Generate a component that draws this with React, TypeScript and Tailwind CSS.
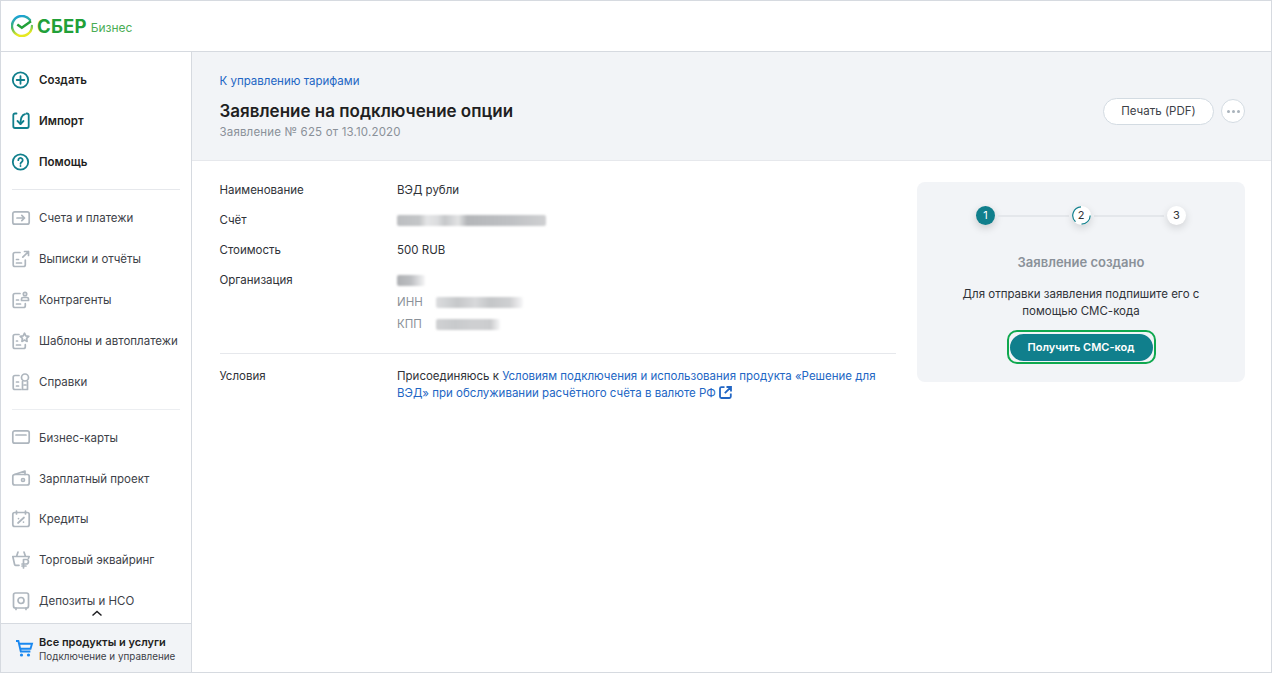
import React from "react";

const g = { fill: "none", stroke: "#aeb6be", strokeWidth: 1.7, strokeLinecap: "round", strokeLinejoin: "round" } as const;
const t = { fill: "none", stroke: "#107f8c", strokeWidth: 1.8, strokeLinecap: "round", strokeLinejoin: "round" } as const;

const Svg = ({ children }: { children: React.ReactNode }) => (
  <svg width="18" height="18" viewBox="0 0 18 18" className="shrink-0 overflow-visible">{children}</svg>
);

const icons: Record<string, React.ReactNode> = {
  create: <Svg><g {...t}><circle cx="8.5" cy="9" r="7.7" /><path d="M8.5 5.2v7.6M4.7 9h7.6" /></g></Svg>,
  import: <Svg><g {...t}><path d="M4.5 1.5H3A1.7 1.7 0 0 0 1.3 3.2v11.1A1.7 1.7 0 0 0 3 16h12a1.7 1.7 0 0 0 1.7-1.7V3.2A1.7 1.7 0 0 0 15 1.5h-.5" /><path d="M13 2.2C9.5 3 8.5 6 8.5 12" /><path d="M5.5 9l3 3 3-3" /></g></Svg>,
  help: <Svg><g {...t}><circle cx="8.5" cy="9" r="7.7" /><path d="M6.3 7.2a2.2 2.2 0 1 1 3.4 1.8c-.8.5-1.2.9-1.2 1.8" /><path d="M8.5 12.9v.1" /></g></Svg>,
  accounts: <Svg><g {...g}><rect x="0.8" y="2.8" width="16.4" height="12.4" rx="2" /><path d="M5 9h7.5M9.8 6.3 12.5 9l-2.7 2.7" /></g></Svg>,
  reports: <Svg><g {...g}><path d="M8 2.5H3a1.8 1.8 0 0 0-1.8 1.8v10.4A1.8 1.8 0 0 0 3 16.5h8.5a1.8 1.8 0 0 0 1.8-1.8V10" /><path d="M10.8 7.2 16.5 1.5M12.5 1.5h4v4" /><path d="M4.5 9.5h2M4.5 13h5" /></g></Svg>,
  partners: <Svg><g {...g}><path d="M8 2.5H3a1.8 1.8 0 0 0-1.8 1.8v10.4A1.8 1.8 0 0 0 3 16.5h8.5a1.8 1.8 0 0 0 1.8-1.8v-2" /><circle cx="13" cy="3" r="1.7" /><path d="M9.5 9.5V8a1.5 1.5 0 0 1 1.5-1.5h4A1.5 1.5 0 0 1 16.5 8v1.5z" /><path d="M4.5 9h2M4.5 13h4" /></g></Svg>,
  templates: <Svg><g {...g}><path d="M7 2.5H3a1.8 1.8 0 0 0-1.8 1.8v10.4A1.8 1.8 0 0 0 3 16.5h8.5a1.8 1.8 0 0 0 1.8-1.8v-2" /><path d="m12.5 1.2 1.3 2.7 3 .4-2.2 2.1.5 3-2.6-1.4-2.6 1.4.5-3-2.2-2.1 3-.4z" /><path d="M4.5 9h1M4.5 13h4" /></g></Svg>,
  refs: <Svg><g {...g}><path d="M7 2.5H3a1.8 1.8 0 0 0-1.8 1.8v10.4A1.8 1.8 0 0 0 3 16.5h6" /><circle cx="13" cy="4.5" r="3.5" /><path d="M10.5 8.5v8h5v-8" /><path d="M4.5 9h2M4.5 13h2M12 12h2" /></g></Svg>,
  cards: <Svg><g {...g}><rect x="0.8" y="2.8" width="16.4" height="12.4" rx="2" /><path d="M4 7h10" /></g></Svg>,
  salary: <Svg><g {...g}><path d="M2.5 5.5 13 2v3.5" /><rect x="0.8" y="5.5" width="16.4" height="10.5" rx="2" /><circle cx="11" cy="11" r="1.5" /></g></Svg>,
  credits: <Svg><g {...g}><rect x="0.8" y="2.5" width="16.4" height="14" rx="2" /><path d="M4.5 1v3M13.5 1v3M6 13l6-5.5" /><path d="M6.5 8.5v.1M11.5 12v.1" /></g></Svg>,
  acquiring: <Svg><g {...g}><path d="M4.5 5.5 6 1M13.5 5.5 12 1M.8 5.5h16.4l-.8 2M.8 5.5l1.8 8a1 1 0 0 0 1 .8H7" /><path d="M11.5 17V8.5h2.7a2 2 0 0 1 0 4.5H10M10 15h4" /></g></Svg>,
  deposits: <Svg><g {...g}><rect x="1.5" y="1" width="15" height="15" rx="2" /><circle cx="9" cy="8.5" r="3" /><path d="M4 16v1.5M14 16v1.5" /></g></Svg>,
};

const items1: [string, string][] = [["create", "Создать"], ["import", "Импорт"], ["help", "Помощь"]];
const items2: [string, string][] = [["accounts", "Счета и платежи"], ["reports", "Выписки и отчёты"], ["partners", "Контрагенты"], ["templates", "Шаблоны и автоплатежи"], ["refs", "Справки"]];
const items3: [string, string][] = [["cards", "Бизнес-карты"], ["salary", "Зарплатный проект"], ["credits", "Кредиты"], ["acquiring", "Торговый эквайринг"], ["deposits", "Депозиты и НСО"]];

function Item({ icon, label, bold, tight }: { icon: string; label: string; bold?: boolean; tight?: boolean }) {
  return (
    <div className={tight ? "flex h-[40.8px] items-center gap-[9px] pl-[11px]" : "flex h-[41px] items-center gap-[9px] pl-[11px]"}>
      {icons[icon]}
      <span className={bold ? "pt-[2px] text-[11.5px] font-semibold text-[#1f1f22]" : "whitespace-nowrap pt-[2px] text-[11.5px] text-[#3d4148]"}>{label}</span>
    </div>
  );
}

function Row({ label, children }: { label: string; children: React.ReactNode }) {
  return (
    <div className="flex">
      <div className="w-[177.5px] shrink-0 text-[#2f3238]">{label}</div>
      <div className="min-w-0 flex-1 text-[#2f3238]">{children}</div>
    </div>
  );
}

function Blur({ w, cls }: { w: number; cls: string }) {
  return <div className={cls} style={{ width: w }} />;
}

const blurAccount = "h-[11px] rounded-[2px] blur-[1px] bg-[linear-gradient(90deg,#bcbec1_0,#c4c6c8_15%,#e4e5e6_20%,#dcdddf_27%,#c6c8ca_32%,#d8d9db_38%,#e2e3e4_41%,#b4b6b9_47%,#bec0c3_75%,#cfd0d2_100%)]";
const blurOrg = "h-[11px] rounded-[2px] blur-[1px] bg-gradient-to-r from-[#aeb0b4] via-[#bdbfc2] to-[#f6f6f7]";
const blurInn = "h-[11px] rounded-[2px] blur-[1px] bg-[linear-gradient(90deg,#dcdddf_0,#c6c8ca_25%,#d8d9db_45%,#c4c6c8_62%,#cfd0d2_85%,#f7f7f8_100%)]";
const blurKpp = "h-[11px] rounded-[2px] blur-[1px] bg-[linear-gradient(90deg,#d0d1d3_0,#c8cacc_30%,#cfd0d2_60%,#cbccce_85%,#f7f7f8_100%)]";

function Step({ n, kind }: { n: number; kind: "done" | "active" | "todo" }) {
  if (kind === "done")
    return <div className="flex h-[19px] w-[19px] shrink-0 items-center justify-center rounded-full bg-[#107f8c] text-[11px] text-white shadow-[0_3px_8px_rgba(0,0,0,0.18)]">{n}</div>;
  return (
    <div className="relative flex h-[19px] w-[19px] shrink-0 items-center justify-center rounded-full bg-white text-[11px] text-[#2f3238] shadow-[0_3px_8px_rgba(0,0,0,0.14)]">
      {kind === "active" && (
        <svg width="19" height="19" viewBox="0 0 19 19" className="absolute left-0 top-0">
          <path d="M9 .8A8.7 8.7 0 0 0 3.5 15.8M9.5 18.2A8.7 8.7 0 0 0 18.2 9.5" fill="none" stroke="#107f8c" strokeWidth="1.2" />
        </svg>
      )}
      <span className="relative">{n}</span>
    </div>
  );
}

export default function App() {
  return (
    <div className="flex h-[673px] w-[1272px] flex-col overflow-hidden border border-[#d6dae0] bg-white text-[11.5px] leading-[17px]" style={{ fontFamily: "Inter, sans-serif" }}>
      <header className="flex h-[51px] shrink-0 items-center gap-[4px] border-b border-[#d6dae0] pl-[10px]">
        <svg width="22" height="22" viewBox="0 0 22 22" className="shrink-0">
          <defs>
            <linearGradient id="lg" x1="0.3" y1="0" x2="0.5" y2="1">
              <stop offset="0" stopColor="#1ba2d8" />
              <stop offset="0.5" stopColor="#3fb56a" />
              <stop offset="0.9" stopColor="#e6e820" />
            </linearGradient>
          </defs>
          <path d="M19 5A10 10 0 1 0 21 11" fill="none" stroke="url(#lg)" strokeWidth="2.4" strokeLinecap="round" />
          <path d="M6.3 9.6 10.8 12.8 20 6.3" fill="none" stroke="#21a038" strokeWidth="2.5" />
        </svg>
        <span className="text-[18.5px] font-bold leading-none tracking-[0.2px] text-[#21a038]">СБЕР</span>
        <span className="mt-[2px] text-[12px] text-[#4aad55]">Бизнес</span>
      </header>
      <div className="flex min-h-0 flex-1">
        <aside className="relative flex w-[191px] shrink-0 flex-col border-r border-[#d6dae0]">
          <div className="flex-1 overflow-hidden pt-[7px]">
            {items1.map(([i, l]) => <Item key={l} icon={i} label={l} bold />)}
            <div className="mx-[11px] my-[7px] h-px bg-[#e6e8ec]" />
            {items2.map(([i, l]) => <Item key={l} icon={i} label={l} />)}
            <div className="mx-[11px] my-[7px] h-px bg-[#eceef1]" />
            {items3.map(([i, l]) => <Item key={l} icon={i} label={l} tight />)}
          </div>
          <svg width="12" height="7" viewBox="0 0 12 7" className="absolute bottom-[55px] left-[90px]">
            <path d="M1.5 5.5 6 1.5l4.5 4" fill="none" stroke="#1f1f22" strokeWidth="1.5" />
          </svg>
          <div className="flex h-[49px] shrink-0 items-center gap-[5px] border-t border-[#d6dae0] bg-[#f2f4f7] pl-[14px]">
            <svg width="19" height="19" viewBox="0 0 19 19" className="shrink-0">
              <path d="M1 2h2.4l2.4 10.5h9.6M4 4.8h13l-1.5 5H5.3" fill="none" stroke="#1a88f0" strokeWidth="1.9" />
              <circle cx="6.5" cy="16" r="1.6" fill="#1a88f0" />
              <circle cx="13.5" cy="16" r="1.6" fill="#1a88f0" />
            </svg>
            <div>
              <div className="text-[11px] font-semibold leading-[15px] text-[#1f1f22]">Все продукты и услуги</div>
              <div className="whitespace-nowrap text-[9.85px] leading-[12px] text-[#3d4148]">Подключение и управление</div>
            </div>
          </div>
        </aside>
        <main className="min-w-0 flex-1">
          <section className="flex h-[109px] items-center justify-between border-b border-[#e6e8ec] bg-[#f2f4f7] pl-[27.5px] pr-[26px]">
            <div className="mt-[1px]">
              <div className="text-[#2266c4]">К управлению тарифами</div>
              <h1 className="mt-[10px] text-[17px] font-semibold leading-[22px] text-[#1f1f22]">Заявление на подключение опции</h1>
              <div className="mt-[2px] tracking-[0.17px] text-[#8a9199]">Заявление № 625 от 13.10.2020</div>
            </div>
            <div className="mt-[10px] flex items-center gap-[7px]">
              <div className="flex h-[27px] w-[111px] items-center justify-center rounded-full border border-[#d3dbe2] bg-white text-[#3d4148]">Печать (PDF)</div>
              <div className="flex h-[24px] w-[24px] items-center justify-center gap-[2px] rounded-full border border-[#d3dbe2] bg-white">
                <i className="h-[3px] w-[3px] rounded-full bg-[#a9b2bb]" />
                <i className="h-[3px] w-[3px] rounded-full bg-[#a9b2bb]" />
                <i className="h-[3px] w-[3px] rounded-full bg-[#a9b2bb]" />
              </div>
            </div>
          </section>
          <section className="flex items-start gap-[21px] pl-[27.5px] pr-[26px] pt-[21px]">
            <div className="w-[676.5px] shrink-0">
              <div className="flex flex-col gap-[13px] pb-[20px]">
                <Row label="Наименование">ВЭД рубли</Row>
                <Row label="Счёт"><div className="flex h-[17px] items-center"><Blur w={149} cls={blurAccount} /></div></Row>
                <Row label="Стоимость">500 RUB</Row>
                <Row label="Организация">
                  <div className="flex h-[17px] items-center"><Blur w={28} cls={blurOrg} /></div>
                  <div className="mt-[5px] flex h-[17px] items-center gap-[13px] text-[#8a9199]"><span className="w-[26px]">ИНН</span><Blur w={87} cls={blurInn} /></div>
                  <div className="mt-[5px] flex h-[17px] items-center gap-[13px] text-[#8a9199]"><span className="w-[26px]">КПП</span><Blur w={64} cls={blurKpp} /></div>
                </Row>
              </div>
              <div className="border-t border-[#e6e8ec] pt-[14px]">
                <Row label="Условия">
                  Присоединяюсь к <span className="text-[#2266c4]">Условиям подключения и использования продукта «Решение для ВЭД» при обслуживании расчётного счёта в валюте РФ</span>{" "}
                  <svg width="13" height="13" viewBox="0 0 13 13" className="inline-block align-[-2px]">
                    <path d="M5.5 1.2H2.4A1.4 1.4 0 0 0 1 2.6v8A1.4 1.4 0 0 0 2.4 12h8a1.4 1.4 0 0 0 1.4-1.4V7.5M7.5 1H12v4.5M12 1 5.8 7.2" fill="none" stroke="#2266c4" strokeWidth="1.8" />
                  </svg>
                </Row>
              </div>
            </div>
            <div className="flex h-[200px] w-[328px] shrink-0 flex-col items-center rounded-[8px] bg-[#f2f4f7] pt-[24px]">
              <div className="flex w-[210px] items-center">
                <Step n={1} kind="done" />
                <div className="mx-[3px] h-[2px] flex-1 bg-[#e4e7eb]" />
                <Step n={2} kind="active" />
                <div className="mx-[3px] h-[2px] flex-1 bg-[#e4e7eb]" />
                <Step n={3} kind="todo" />
              </div>
              <div className="mt-[29px] text-[13px] font-semibold leading-[17px] text-[#8a9199]">Заявление создано</div>
              <div className="mt-[15px] w-[260px] text-center text-[#2f3238]">Для отправки заявления подпишите его с помощью СМС-кода</div>
              <div className="mt-[10px] rounded-[10px] border-2 border-[#0fa84f] px-px py-[1.5px]">
                <div className="flex h-[27px] w-[143px] items-center justify-center rounded-full bg-[#107f8c] text-[11px] font-semibold text-white">Получить СМС-код</div>
              </div>
            </div>
          </section>
        </main>
      </div>
    </div>
  );
}
